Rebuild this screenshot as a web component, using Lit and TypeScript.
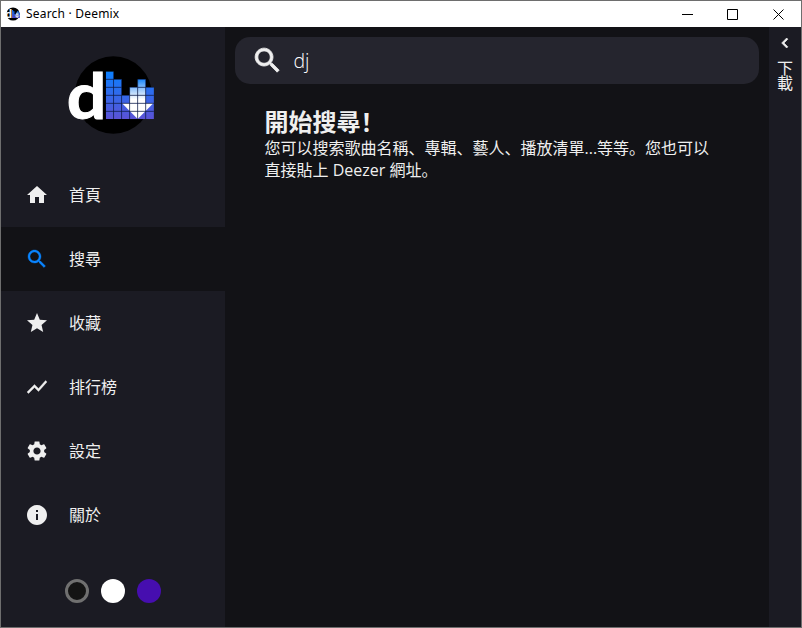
import { LitElement, html, css, svg } from "lit";
import { customElement } from "lit/decorators.js";
import { classMap } from "lit/directives/class-map.js";

const ICONS = {
  home: "M10 20v-6h4v6h5v-8h3L12 3 2 12h3v8z",
  search:
    "M15.5 14h-.79l-.28-.27C15.41 12.59 16 11.11 16 9.5 16 5.91 13.09 3 9.5 3S3 5.91 3 9.5 5.91 16 9.5 16c1.61 0 3.09-.59 4.23-1.57l.27.28v.79l5 4.99L20.49 19l-4.99-5zm-6 0C7.01 14 5 11.99 5 9.5S7.01 5 9.5 5 14 7.01 14 9.5 11.99 14 9.5 14z",
  star: "M12 17.27L18.18 21l-1.64-7.03L22 9.24l-7.19-.61L12 2 9.19 8.63 2 9.24l5.46 4.73L5.82 21z",
  chart: "M3.5 18.49l6-6.01 4 4L22 6.92l-1.41-1.41-7.09 7.97-4-4L2 16.99z",
  settings:
    "M19.14 12.94c.04-.3.06-.61.06-.94 0-.32-.02-.64-.07-.94l2.03-1.58c.18-.14.23-.41.12-.61l-1.92-3.32c-.12-.22-.37-.29-.59-.22l-2.39.96c-.5-.38-1.03-.7-1.62-.94L14.4 2.81c-.04-.24-.24-.41-.48-.41h-3.84c-.24 0-.43.17-.47.41L9.25 5.35c-.59.24-1.13.57-1.62.94L5.24 5.33c-.22-.08-.47 0-.59.22L2.74 8.87c-.12.21-.08.47.12.61l2.03 1.58c-.05.3-.09.63-.09.94s.02.64.07.94l-2.03 1.58c-.18.14-.23.41-.12.61l1.92 3.32c.12.22.37.29.59.22l2.39-.96c.5.38 1.03.7 1.62.94l.36 2.54c.05.24.24.41.48.41h3.84c.24 0 .44-.17.47-.41l.36-2.54c.59-.24 1.13-.56 1.62-.94l2.39.96c.22.08.47 0 .59-.22l1.92-3.32c.12-.22.07-.47-.12-.61l-2.01-1.58zM12 15.6c-1.98 0-3.6-1.62-3.6-3.6s1.62-3.6 3.6-3.6 3.6 1.62 3.6 3.6-1.62 3.6-3.6 3.6z",
  info: "M12 2C6.48 2 2 6.48 2 12s4.48 10 10 10 10-4.48 10-10S17.52 2 12 2zm1 15h-2v-6h2v6zm0-8h-2V7h2v2z",
  chevron: "M15.41 7.41L14 6l-6 6 6 6 1.41-1.41L10.83 12z",
};

const icon = (name: keyof typeof ICONS) =>
  html`<svg class="icon ${name}" viewBox="0 0 24 24"><path d=${ICONS[name]} /></svg>`;

@customElement("deemix-logo")
class DeemixLogo extends LitElement {
  static styles = css`
    :host { display: block; }
    svg { display: block; width: 100%; height: 100%; }
    .letter { font: 700 192px Lato, sans-serif; fill: #fff; stroke: #fff; stroke-width: 3px; }
  `;

  // Height of each equalizer column, in cells.
  private columns = [6, 5, 3, 4, 5, 4];

  render() {
    return html`<svg viewBox="0 0 300 270">
      <defs>
        <linearGradient id="blue" gradientUnits="userSpaceOnUse" x1="0" y1="64" x2="0" y2="207">
          <stop offset="0" stop-color="#0a80ff" />
          <stop offset="1" stop-color="#5b52d6" />
        </linearGradient>
        <linearGradient id="shaft" gradientUnits="userSpaceOnUse" x1="0" y1="88" x2="0" y2="148">
          <stop offset="0" stop-color="#1a86f8" />
          <stop offset="0.45" stop-color="#8fc2fb" />
          <stop offset="1" stop-color="#fff" />
        </linearGradient>
        <clipPath id="bars">
          ${this.columns.map((n, c) => svg`<rect x=${137 + c * 24.1} y=${208 - n * 24} width="24.1" height=${n * 24} />`)}
        </clipPath>
      </defs>
      <circle cx="160" cy="135" r="116" fill="#000" />
      <g clip-path="url(#bars)">
        <rect x="137" y="64" width="145" height="144" fill="url(#blue)" />
        <rect x="209" y="88" width="48" height="73" fill="url(#shaft)" />
        <path d="M186 160H280L233 207z" fill="#fff" />
        ${[1, 2, 3, 4, 5].map((i) => svg`<path d="M${136.5 + i * 24.1} 64V208M137 ${64 + i * 24}H282" stroke="#0d1c48" stroke-width="2.3" />`)}
      </g>
      <text class="letter" x="20.5" y="205.5" textLength="119" lengthAdjust="spacingAndGlyphs">d</text>
    </svg>`;
  }
}

@customElement("app-root")
class AppRoot extends LitElement {
  static styles = css`
    :host {
      display: flex;
      flex-direction: column;
      box-sizing: border-box;
      width: 802px;
      height: 628px;
      border: 1px solid #6e6e6e;
      background: #121216;
      color: #efefef;
      font: 16px/22px "Open Sans", "Noto Sans CJK SC", sans-serif;
      overflow: hidden;
    }
    * { box-sizing: border-box; }
    .titlebar { display: flex; align-items: center; height: 26px; flex: none; padding-left: 3px; background: #fff; color: #000; }
    .app-icon { width: 17px; height: 16px; }
    .title { flex: 1; margin-left: 5px; font: 12px/16px "Noto Sans", sans-serif; letter-spacing: 0.2px; }
    .control { display: flex; justify-content: center; width: 45.5px; }
    .control svg { width: 11px; height: 11px; fill: none; stroke: #000; }
    .body { display: flex; flex: 1; min-height: 0; }
    .sidebar { display: flex; flex-direction: column; width: 224px; background: #1b1b23; }
    .logo { width: 100px; height: 90px; margin: 23px 0 23px 59px; }
    .item { display: flex; align-items: center; height: 64px; padding-left: 24px; }
    .item.active { background: #121216; }
    .icon { display: block; width: 24px; height: 24px; fill: currentColor; flex: none; }
    .icon.chart, .icon.search { stroke: currentColor; stroke-width: 0.35px; }
    .active .icon { color: #0a84ff; }
    .label { margin-left: 20px; }
    .themes { display: flex; gap: 12px; margin: 32px 0 0 64px; }
    .swatch { width: 24px; height: 24px; border-radius: 50%; }
    .dark { background: #141414; border: 3px solid #707070; }
    .light { background: #fff; }
    .purple { background: #460eaf; }
    .main { flex: 1; padding: 10px; }
    .search-box { display: flex; align-items: center; height: 47px; padding-left: 16px; border-radius: 15px; background: #25252e; }
    .search-box .icon { width: 33px; height: 33px; stroke-width: 0.6px; }
    .query { margin-left: 9.5px; font-size: 19.5px; font-weight: 300; color: #fff; }
    .intro { padding: 22px 30px 0 29.5px; }
    h1 { margin: 0; font-size: 24px; line-height: 31px; font-weight: 700; }
    p { margin: 0; width: 450px; }
    .downloads { display: flex; flex-direction: column; align-items: center; width: 32px; background: #1b1b23; padding-top: 8px; }
    .downloads .icon { width: 16px; height: 16px; transform: scale(1.25); stroke: currentColor; stroke-width: 0.8px; }
    .vertical { width: 16px; margin-top: 10px; line-height: 15px; word-break: break-all; }
  `;

  private items: { icon: keyof typeof ICONS; label: string; active?: boolean }[] = [
    { icon: "home", label: "首頁" },
    { icon: "search", label: "搜尋", active: true },
    { icon: "star", label: "收藏" },
    { icon: "chart", label: "排行榜" },
    { icon: "settings", label: "設定" },
    { icon: "info", label: "關於" },
  ];

  render() {
    return html`
      <div class="titlebar">
        <deemix-logo class="app-icon"></deemix-logo>
        <div class="title">Search · Deemix</div>
        <div class="control"><svg viewBox="0 0 11 11"><path d="M0 5.5H11" /></svg></div>
        <div class="control"><svg viewBox="0 0 11 11"><path d="M.5 .5H10.5V10.5H.5z" /></svg></div>
        <div class="control"><svg viewBox="0 0 11 11"><path d="M.5 .5L10.5 10.5M10.5 .5L.5 10.5" /></svg></div>
      </div>
      <div class="body">
        <nav class="sidebar">
          <deemix-logo class="logo"></deemix-logo>
          ${this.items.map(
            (i) => html`<div class=${classMap({ item: true, active: !!i.active })}>
              ${icon(i.icon)}<span class="label">${i.label}</span>
            </div>`,
          )}
          <div class="themes">
            <span class="swatch dark"></span><span class="swatch light"></span><span class="swatch purple"></span>
          </div>
        </nav>
        <main class="main">
          <div class="search-box">${icon("search")}<span class="query">dj</span></div>
          <div class="intro">
            <h1>開始搜尋！</h1>
            <p>您可以搜索歌曲名稱、專輯、藝人、播放清單...等等。您也可以直接貼上 Deezer 網址。</p>
          </div>
        </main>
        <aside class="downloads">${icon("chevron")}<span class="vertical">下載</span></aside>
      </div>
    `;
  }
}
